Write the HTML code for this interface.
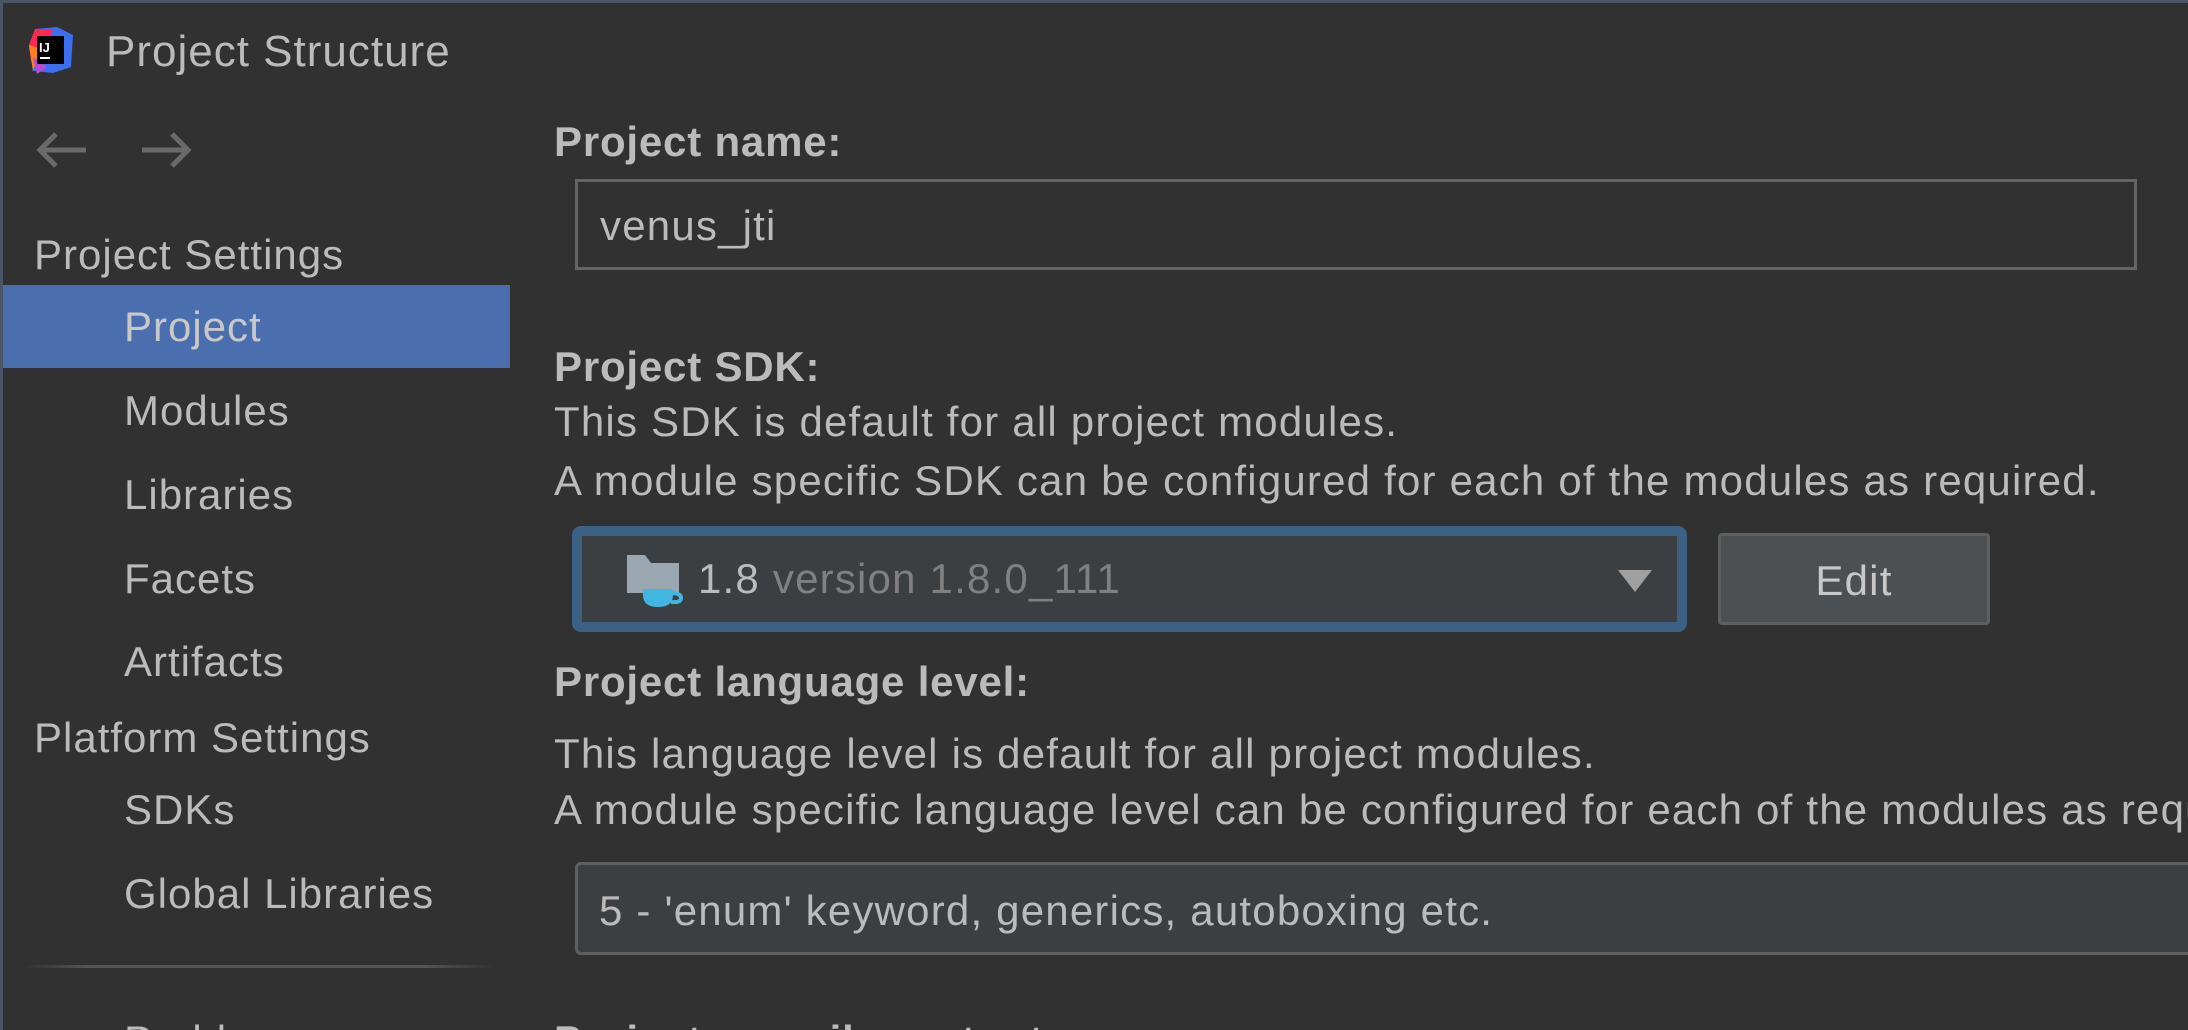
<!DOCTYPE html>
<html><head><meta charset="utf-8"><style>
*{margin:0;padding:0;box-sizing:border-box}
html{overflow:hidden;width:2188px;height:1030px}
body{width:2188px;height:1030px;background:#313131;overflow:hidden;position:relative;font-family:"Liberation Sans",sans-serif;color:#bbbbbb}
.t{position:absolute;white-space:nowrap;font-size:42px;line-height:50px;height:50px;letter-spacing:1.2px}
.s{font-size:42px;letter-spacing:1px}
.b{font-weight:bold;letter-spacing:0.8px}
</style></head><body>
<div style="position:absolute;left:0;top:0;width:2188px;height:3px;background:#4a5566"></div>
<div style="position:absolute;left:0;top:0;width:3px;height:1030px;background:#4a5566"></div>
<svg style="position:absolute;left:29px;top:27px" width="44" height="48" viewBox="0 0 44 48">
<polygon points="6,2 28,0 44,8 42,40 24,46 4,44 0,20" fill="#3b6ff0"/>
<polygon points="6,2 24,2 16,30 2,34 0,18" fill="#fe2857"/>
<polygon points="0,18 12,22 4,44" fill="#fc801d"/>
<polygon points="4,30 18,40 8,47" fill="#b84ad8"/>
<rect x="8" y="9" width="27" height="28" fill="#000"/>
<text x="10" y="25" font-family="Liberation Sans" font-weight="bold" font-size="13" fill="#fff">IJ</text>
<rect x="11" y="30" width="10" height="2" fill="#fff"/>
</svg>
<div class="t" style="left:106px;top:27px;font-size:44px;letter-spacing:1px">Project Structure</div>
<svg style="position:absolute;left:36px;top:130px" width="160" height="40" viewBox="0 0 160 40" fill="none" stroke="#6a6a6a" stroke-width="5">
<path d="M4 20H50M20 4L4 20L20 36"/>
<path d="M106 20H152M136 4L152 20L136 36"/>
</svg>
<div class="t s" style="left:34px;top:230px">Project Settings</div>
<div style="position:absolute;left:3px;top:285px;width:507px;height:83px;background:#4b6eaf"></div>
<div class="t s" style="left:124px;top:302px;color:#c8c8c8">Project</div>
<div class="t s" style="left:124px;top:386px">Modules</div>
<div class="t s" style="left:124px;top:470px">Libraries</div>
<div class="t s" style="left:124px;top:554px">Facets</div>
<div class="t s" style="left:124px;top:637px">Artifacts</div>
<div class="t s" style="left:34px;top:713px">Platform Settings</div>
<div class="t s" style="left:124px;top:785px">SDKs</div>
<div class="t s" style="left:124px;top:869px">Global Libraries</div>
<div style="position:absolute;left:20px;top:965px;width:475px;height:3px;background:linear-gradient(90deg,#313131,#555 15%,#555 85%,#313131)"></div>
<div class="t s" style="left:124px;top:1016px">Problems</div>

<div class="t b" style="left:554px;top:117px">Project name:</div>
<div style="position:absolute;left:575px;top:179px;width:1562px;height:91px;border:3px solid #646464;background:#313131"></div>
<div class="t" style="left:600px;top:201px">venus_jti</div>

<div class="t b" style="left:554px;top:342px">Project SDK:</div>
<div class="t" style="left:554px;top:397px">This SDK is default for all project modules.</div>
<div class="t" style="left:554px;top:456px">A module specific SDK can be configured for each of the modules as required.</div>
<div style="position:absolute;left:572px;top:526px;width:1115px;height:106px;border:10px solid #3d6185;border-radius:9px;background:#3c3f41"></div>
<svg style="position:absolute;left:627px;top:555px" width="58" height="56" viewBox="0 0 58 56">
<path d="M0 0H18L24 8H52V38H0Z" fill="#9aa7b0"/>
<path d="M16 34H46V40Q46 52 31 52Q16 52 16 40Z" fill="#40b6e0"/>
<path d="M44 38Q54 38 54 43Q54 48 44 47" fill="none" stroke="#40b6e0" stroke-width="4"/>
</svg>
<div class="t" style="left:698px;top:554px"><span style="color:#bbbbbb">1.8</span> <span style="color:#808080">version 1.8.0_111</span></div>
<svg style="position:absolute;left:1618px;top:570px" width="34" height="22"><polygon points="0,0 34,0 17,22" fill="#a0a0a0"/></svg>
<div style="position:absolute;left:1718px;top:533px;width:272px;height:92px;border:3px solid #5e6060;border-radius:4px;background:#4c5052"></div>
<div class="t" style="left:1718px;top:556px;width:272px;text-align:center;color:#c8c8c8">Edit</div>

<div class="t b" style="left:554px;top:657px">Project language level:</div>
<div class="t" style="left:554px;top:729px">This language level is default for all project modules.</div>
<div class="t" style="left:554px;top:785px">A module specific language level can be configured for each of the modules as required.</div>
<div style="position:absolute;left:575px;top:862px;width:1650px;height:93px;border:3px solid #5e6060;border-radius:6px;background:#3c3f41"></div>
<div class="t" style="left:599px;top:886px">5 - 'enum' keyword, generics, autoboxing etc.</div>
<div class="t b" style="left:554px;top:1016px">Project compiler output:</div>
</body></html>
